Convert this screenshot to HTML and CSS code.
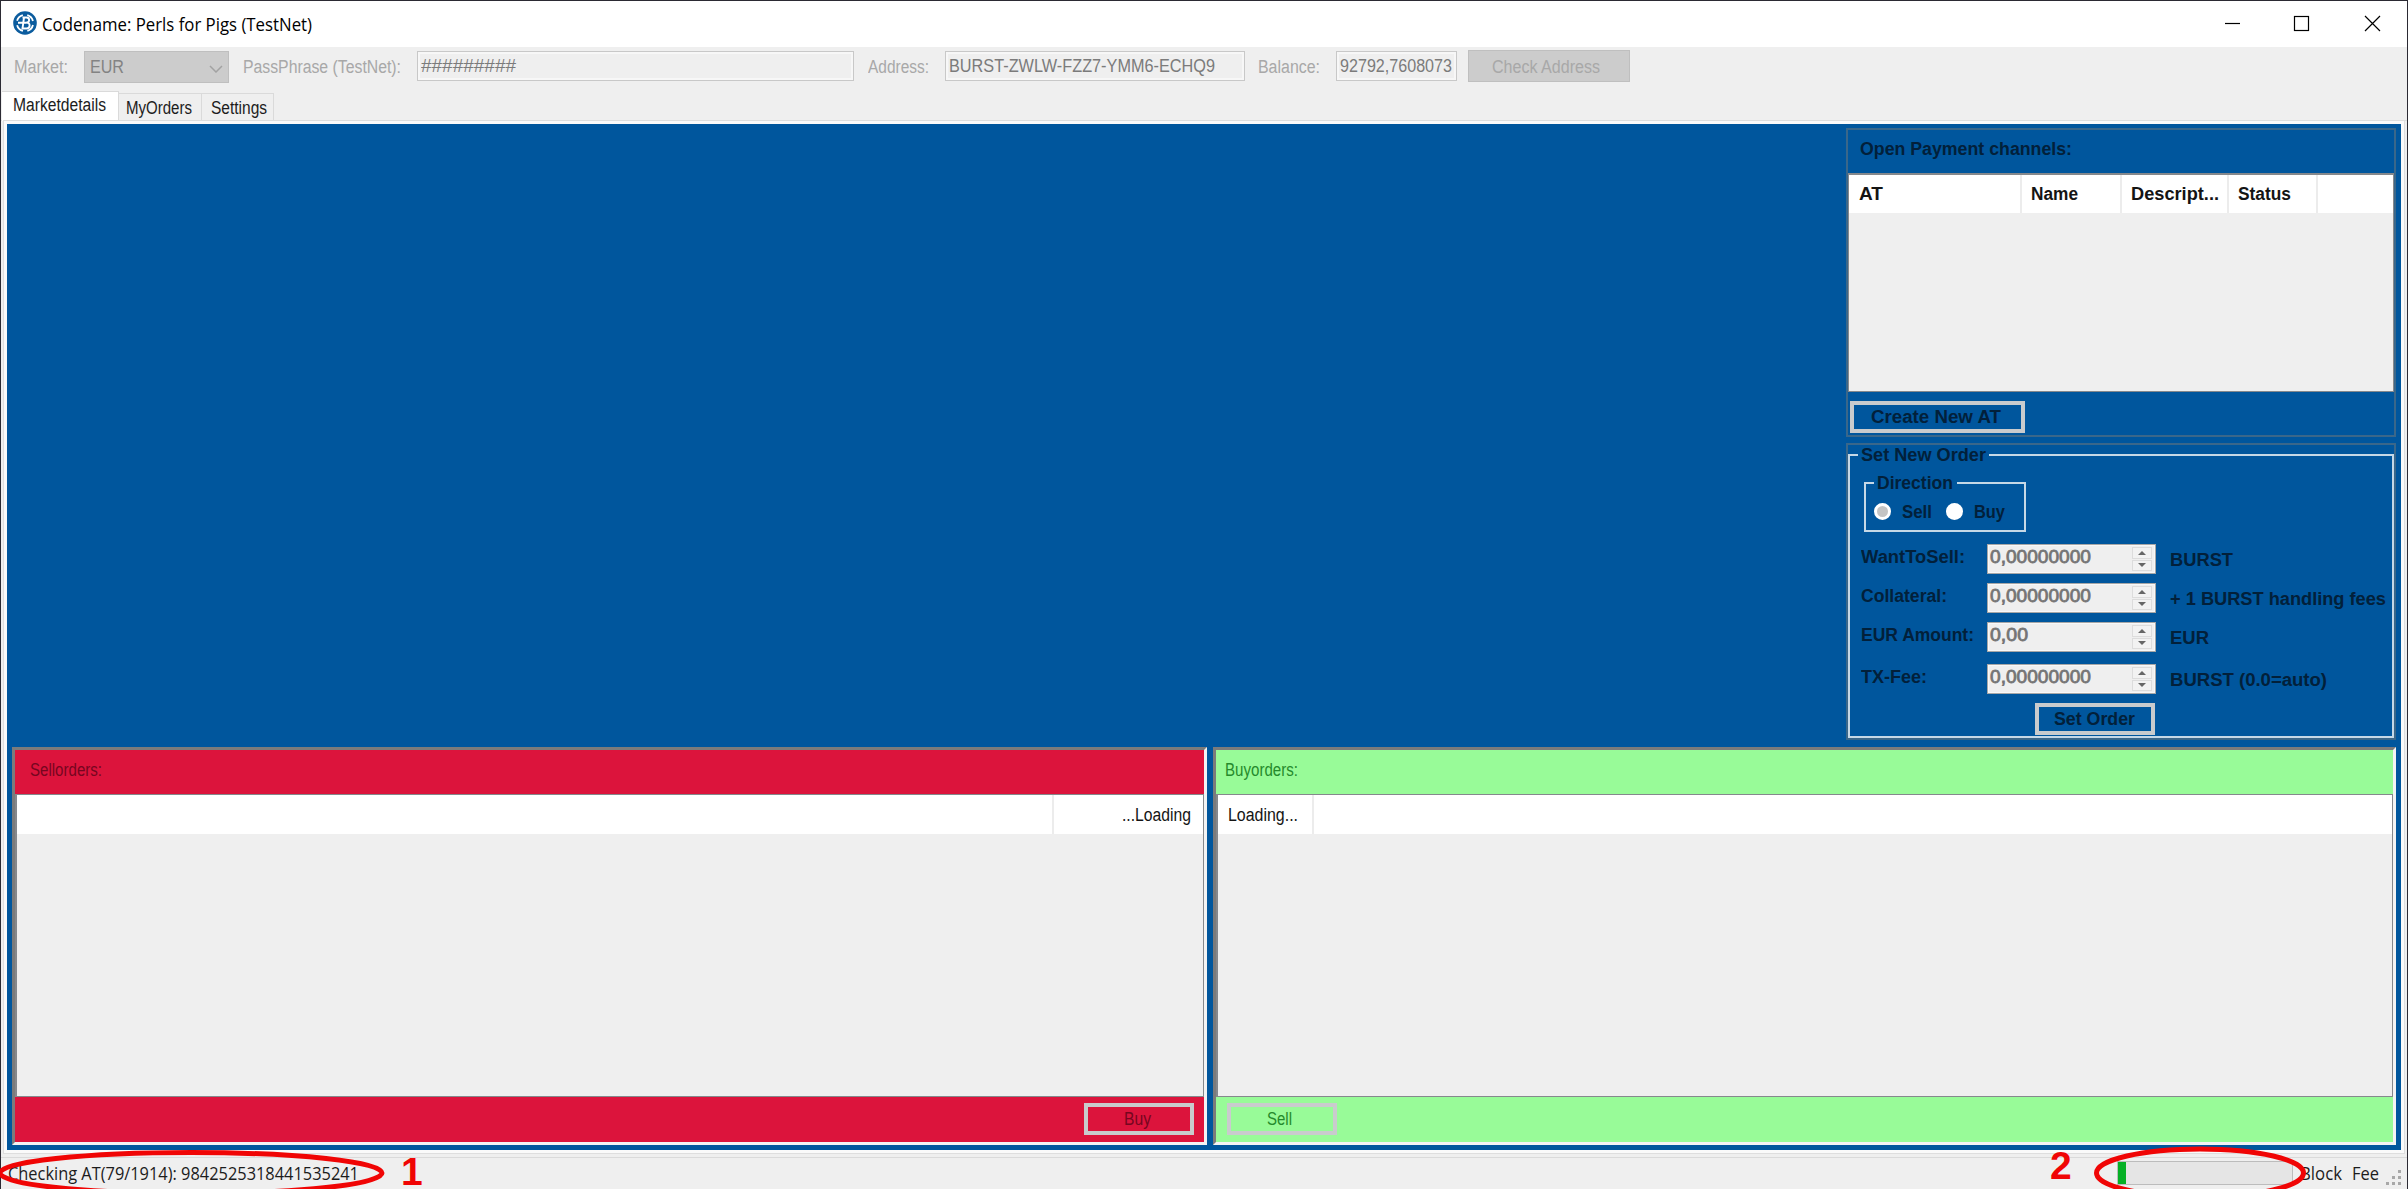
FILE: index.html
```html
<!DOCTYPE html>
<html lang="en">
<head>
<meta charset="utf-8">
<title>Codename: Perls for Pigs (TestNet)</title>
<link rel="stylesheet" href="styles.css">
</head>
<body>
<div class="window">
  <header class="titlebar">
    <svg class="logo" viewBox="0 0 24 24" width="24" height="24">
      <circle cx="12" cy="12" r="11.8" fill="#0b5c9e"/>
      <circle cx="12" cy="12" r="8.2" fill="none" stroke="#fff" stroke-width="1.8" stroke-dasharray="8.4 4.5" stroke-dashoffset="-2"/>
      <path d="M9.5 6.5H13.5C17 6.5 17 11.500 13.5 11.500C17.800 11.500 17.500 17.500 13.500 17.500H8.500M11 6.500L9.500 17.500M5 11.700H13.500" fill="none" stroke="#fff" stroke-width="1.900"/>
    </svg>
    <span class="t ui title" data-w="270">Codename: Perls for Pigs (TestNet)</span>
    <svg class="controls" viewBox="0 0 160 17" width="160" height="17" fill="none" stroke="#000" stroke-width="1.200">
      <path d="M1 8.500H16"/>
      <rect x="70.500" y="1.500" width="14" height="14"/>
      <path d="M141 1L156 16M156 1L141 16"/>
    </svg>
  </header>

  <div class="toolbar">
    <span class="t" data-w="54">Market:</span>
    <div class="combo"><span class="t" data-w="34">EUR</span>
      <svg width="14" height="8" viewBox="0 0 14 8"><path d="M1 1L7 7L13 1" fill="none" stroke="#a2a2a2" stroke-width="1.500"/></svg>
    </div>
    <span class="t" data-w="158">PassPhrase (TestNet):</span>
    <div class="box pass"><span class="t" data-w="95">#########</span></div>
    <span class="t" data-w="61">Address:</span>
    <div class="box addr"><span class="t" data-w="266">BURST-ZWLW-FZZ7-YMM6-ECHQ9</span></div>
    <span class="t" data-w="62">Balance:</span>
    <div class="box bal"><span class="t" data-w="112">92792,7608073</span></div>
    <div class="check"><span class="t" data-w="108">Check Address</span></div>
  </div>

  <nav class="tabs">
    <div class="tab active"><span class="t" data-w="93">Marketdetails</span></div>
    <div class="tab orders"><span class="t" data-w="66">MyOrders</span></div>
    <div class="tab settings"><span class="t" data-w="56">Settings</span></div>
  </nav>

  <main class="page">
    <div class="side">
      <section class="panel channels">
        <div class="cap"><span class="t" data-w="212">Open Payment channels:</span></div>
        <div class="list">
          <div class="head">
            <div><span class="t" data-w="24">AT</span></div>
            <div><span class="t" data-w="47">Name</span></div>
            <div><span class="t" data-w="88">Descript...</span></div>
            <div><span class="t" data-w="53">Status</span></div>
          </div>
        </div>
        <div class="btn create"><span class="t" data-w="130">Create New AT</span></div>
      </section>

      <section class="panel order">
        <fieldset class="outer">
          <legend><span class="t" data-w="125">Set New Order</span></legend>
          <fieldset class="direction">
            <legend><span class="t" data-w="76">Direction</span></legend>
            <div class="radios">
              <i class="radio on"></i><span class="t" data-w="30">Sell</span>
              <i class="radio"></i><span class="t" data-w="31">Buy</span>
            </div>
          </fieldset>
          <div class="rows">
            <div class="row"><div class="lab"><span class="t" data-w="104">WantToSell:</span></div>
              <div class="num"><span class="t" data-w="101">0,00000000</span><div class="spin"><i class="up"></i><i class="down"></i></div></div>
              <div class="unit"><span class="t" data-w="63">BURST</span></div></div>
            <div class="row"><div class="lab"><span class="t" data-w="86">Collateral:</span></div>
              <div class="num"><span class="t" data-w="101">0,00000000</span><div class="spin"><i class="up"></i><i class="down"></i></div></div>
              <div class="unit"><span class="t" data-w="216">+ 1 BURST handling fees</span></div></div>
            <div class="row"><div class="lab"><span class="t" data-w="113">EUR Amount:</span></div>
              <div class="num"><span class="t" data-w="38">0,00</span><div class="spin"><i class="up"></i><i class="down"></i></div></div>
              <div class="unit"><span class="t" data-w="39">EUR</span></div></div>
            <div class="row fee"><div class="lab"><span class="t" data-w="66">TX-Fee:</span></div>
              <div class="num"><span class="t" data-w="101">0,00000000</span><div class="spin"><i class="up"></i><i class="down"></i></div></div>
              <div class="unit"><span class="t" data-w="157">BURST (0.0=auto)</span></div></div>
          </div>
          <div class="btn set"><span class="t" data-w="81">Set Order</span></div>
        </fieldset>
      </section>
    </div>

    <div class="books">
      <section class="book sell">
        <div class="cap"><span class="t" data-w="72">Sellorders:</span></div>
        <div class="list"><div class="head"><div></div><div><span class="t" data-w="69">...Loading</span></div></div></div>
        <div class="foot"><div class="btn"><span class="t" data-w="27">Buy</span></div></div>
      </section>
      <section class="book buy">
        <div class="cap"><span class="t" data-w="73">Buyorders:</span></div>
        <div class="list"><div class="head"><div><span class="t" data-w="70">Loading...</span></div><div></div></div></div>
        <div class="foot"><div class="btn"><span class="t" data-w="25">Sell</span></div></div>
      </section>
    </div>
  </main>

  <footer class="status">
    <span class="t ui" data-w="351">Checking AT(79/1914): 9842525318441535241</span>
    <div class="progress"><div class="fill"></div></div>
    <span class="t ui block" data-w="42">Block</span>
    <span class="t ui fee-label" data-w="27">Fee</span>
    <svg class="grip" width="16" height="16" viewBox="0 0 16 16" fill="#a8a8a8">
      <path d="M12 0h3v3h-3zM6 6h3v3h-3zM12 6h3v3h-3zM0 12h3v3h-3zM6 12h3v3h-3zM12 12h3v3h-3z"/>
    </svg>
  </footer>
</div>

<svg class="marks" width="2408" height="60" viewBox="0 0 2408 60" fill="none" stroke="#f00505" stroke-width="5">
  <ellipse cx="191" cy="44" rx="191" ry="20.500"/>
  <ellipse cx="2200" cy="44" rx="103.500" ry="24"/>
</svg>
<span class="mark one">1</span>
<span class="mark two">2</span>
<script src="fit.js"></script>
</body>
</html>
```
FILE: styles.css
```css
* { box-sizing: border-box; }
body {
  margin: 0; width: 2408px; height: 1189px; overflow: hidden; position: relative;
  font: 18px/20px "Liberation Sans", Arial, sans-serif; color: #1c1c1c;
}
.window {
  width: 2408px; height: 1189px; display: flex; flex-direction: column;
  background: #efefef; border: 1px solid #2b2a33; border-bottom: 0;
}
.t { display: block; flex: none; width: max-content; white-space: pre; transform-origin: 0 0; }
.ui { font-family: "Open Sans", "Noto Sans", sans-serif; font-size: 17.5px; }

.titlebar { height: 46px; flex: none; background: #fff; display: flex; align-items: flex-start; padding: 0 23px 0 12px; }
.logo { margin-top: 10px; }
.title { margin: 13px 0 0 5px; color: #000; }
.controls { margin: 14px 0 0 auto; }

.toolbar { height: 43px; flex: none; display: flex; align-items: flex-start; padding-left: 13px; color: #a8a8a8; }
.toolbar > .t { margin-top: 10px; }
.combo {
  width: 145px; height: 32px; margin: 4px 14px 0 16px; padding: 5px 5px 0 5px; display: flex;
  justify-content: space-between; background: #ccc; border: 1px solid #bfbfbf; color: #838383;
}
.combo svg { margin-top: 8px; }
.box {
  height: 30px; margin-top: 4px; padding: 3px 0 0 3px; flex: none;
  border: 1px solid #c8c8c8; box-shadow: inset 0 0 0 2px #f7f7f7; color: #7b7b7b;
}
.box .t { margin-top: 1px; }
.pass { width: 437px; margin-left: 16px; margin-right: 14px; }
.addr { width: 300px; margin-left: 16px; margin-right: 13px; }
.bal { width: 121px; margin-left: 16px; margin-right: 11px; }
.check { width: 162px; height: 32px; margin-top: 3px; padding: 6px 0 0 23px; background: #ccc; border: 1px solid #bfbfbf; }

.tabs { height: 31px; flex: none; display: flex; align-items: flex-end; padding-left: 1px; border-bottom: 1px solid #dcdcdc; }
.tab { height: 27px; border: 1px solid #dadada; border-left: 0; border-bottom: 0; padding-top: 4px; }
.tab.active { height: 30px; width: 117px; background: #fff; padding: 3px 0 0 11px; margin-bottom: -1px; }
.tab.orders { width: 83px; padding-left: 7px; }
.tab.settings { width: 72px; padding-left: 9px; }

.page {
  width: 2400px; height: 1032px; margin-left: 3px; flex: none; background: #00569d;
  border: 3px solid #fafafa; outline: 1px solid #dedede; padding: 4px 5px 0;
}
.side { width: 550px; height: 619px; margin-left: auto; display: flex; flex-direction: column; gap: 6px; font-weight: bold; color: #02203a; }
.panel { border: 2px solid #3a678a; }
.channels { height: 309px; }
.channels .cap { height: 43px; padding: 9px 0 0 12px; }
.list { background: #efefef; border: 2px solid #85888c; border-top-width: 1px; border-bottom-width: 1px; }
.channels .list { height: 219px; border-left-width: 1px; border-right-width: 1px; border-top-width: 2px; }
.head { height: 38px; display: grid; background: #fff; color: #141414; }
.head > div { border-right: 2px solid #ececec; padding-top: 9px; }
.head > div:last-child { border-right: 0; }
.channels .head { grid-template-columns: 173px 100px 107px 89px 1fr; }
.channels .head > div { padding-left: 9px; }
.channels .head > div:first-child { padding-left: 10px; }
.channels .head > div:last-child { border-right: 2px solid #ececec; }
.btn { border: 4px solid #c9cbcd; height: 32px; padding-top: 2px; }
.create { width: 175px; margin: 9px 0 0 2px; padding-left: 17px; }

.order { height: 297px; padding-top: 1px; }
fieldset { margin: 0; padding: 0; border: 2px solid #c5d8e7; min-width: 0; }
legend { height: 18px; line-height: 18px; padding: 0; }
.outer { height: 292px; }
.outer > legend { margin-left: 8px; padding: 0 3px; }
.direction { width: 162px; height: 58px; margin: 10px 0 0 14px; }
.direction > legend { margin-left: 8px; padding: 0 4px 0 3px; }
.radios { display: flex; padding: 10px 0 0 8px; }
.radio { width: 17px; height: 17px; border-radius: 50%; background: #fff; margin-top: 1px; }
.radio.on { background: #c4c4c4; border: 3px solid #fff; }
.radios .t { margin: 0 14px 0 11px; }
.rows { margin-top: 12px; padding-left: 11px; }
.row { display: grid; grid-template-columns: 126px 169px 1fr; column-gap: 0; height: 30px; margin-bottom: 9px; }
.row.fee { margin-top: 12px; }
.lab { padding-top: 3px; }
.unit { padding: 6px 0 0 14px; }
.num {
  background: #efefef; border: 1px solid #a7a7a7; box-shadow: inset 0 0 0 1px #f8f8f8;
  padding: 2px 3px 0 2px; display: flex; justify-content: space-between;
  color: #747474; font-size: 19px; font-weight: normal; -webkit-text-stroke: 0.8px #747474;
}
.spin { width: 20px; height: 24px; display: flex; flex-direction: column; gap: 1px; }
.spin i { flex: 1; display: flex; align-items: center; justify-content: center; border: 1px solid #dcdcdc; background: #f2f2f2; }
.spin i::before { content: ""; border: 4.5px solid transparent; }
.spin .up::before { border-top: 0; border-bottom-color: #666; }
.spin .down::before { border-bottom: 0; border-top-color: #666; }
.set { width: 120px; margin-left: 185px; padding-left: 15px; }

.books { display: flex; gap: 6px; height: 398px; }
.book { border: 3px solid; border-color: #7b7b7b #f3f3f3 #f3f3f3 #7b7b7b; height: 398px; }
.book .cap { height: 44px; }
.book .list { height: 303px; border-width: 1px 1px 1px 2px; }
.book .head { height: 39px; }
.book .head > div { padding-top: 10px; }
.book .foot { height: 44px; display: flex; padding-top: 6px; }
.book .btn { width: 110px; padding-top: 2px; }
.sell { width: 1195px; background: #dc143c; color: #760620; }
.sell .cap { padding: 10px 0 0 15px; }
.sell .head { grid-template-columns: 1037px 1fr; }
.sell .head > div { padding-left: 68px; }
.sell .foot { padding-left: 1069px; }
.sell .btn { padding-left: 36px; }
.buy { width: 1183px; background: #98fb98; color: #258a2c; }
.buy .cap { padding: 10px 0 0 9px; }
.buy .head { grid-template-columns: 96px 1fr; }
.buy .head > div { padding-left: 10px; }
.buy .foot { padding-left: 11px; }
.buy .btn { padding-left: 36px; }

.status { flex: 1; margin-top: 4px; border-top: 1px solid #dadada; display: flex; align-items: flex-start; padding: 0 5px 0 7px; }
.status > .t { margin-top: 5px; }
.progress { width: 176px; height: 24px; margin: 3px 0 0 auto; border: 1px solid #bcbcbc; background: #e5e5e5; }
.fill { width: 8px; height: 22px; background: #06b025; }
.status > .block { margin-left: 7px; }
.status > .fee-label { margin-left: 10px; }
.grip { margin: 12px 0 0 7px; }

.marks { position: absolute; left: 0; top: 1129px; }
.mark { position: absolute; font-size: 39px; line-height: 34px; font-weight: bold; color: #f00505; }
.one { left: 401px; top: 1155px; }
.two { left: 2050px; top: 1149px; }
```
FILE: fit.js
```js
document.querySelectorAll('.t[data-w]').forEach(function (el) {
  var natural = el.getBoundingClientRect().width;
  var target = Number(el.dataset.w);
  var right = parseFloat(getComputedStyle(el).marginRight) || 0;
  el.style.transform = 'scaleX(' + target / natural + ')';
  el.style.marginRight = (right + target - natural) + 'px';
});
```
